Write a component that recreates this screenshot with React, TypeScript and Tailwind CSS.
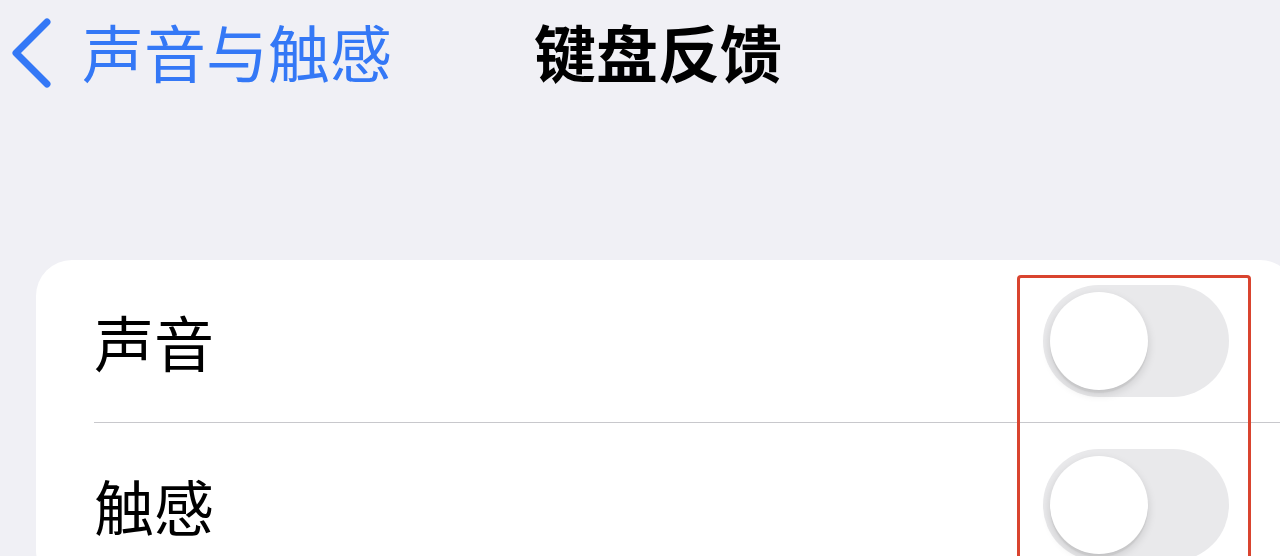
import { ReactNode } from "react"

const FONT = { fontFamily: '"Noto Sans CJK SC", "Noto Sans", sans-serif' }

/* ─── iOS style switch, off state ─── */

const Switch = () => (
  <div className="relative h-[112px] w-[186px] rounded-full bg-[#e9e9eb]">
    <div className="absolute left-[7px] top-[7px] size-[98px] rounded-full bg-white shadow-[0_4px_10px_rgba(0,0,0,0.14),0_3px_1px_rgba(0,0,0,0.05)]" />
  </div>
)

const Row = ({ label, last, children }: { label: string; last?: boolean; children: ReactNode }) => (
  <div className="flex h-[163px] items-center pl-[58px]">
    <div
      className={
        last
          ? "flex h-full flex-1 items-center"
          : "flex h-full flex-1 items-center border-b border-[#c8c8cc]"
      }
    >
      <span className="flex-1 text-[60px] leading-none text-black" style={FONT}>
        {label}
      </span>
      <div className="mr-[67px]">{children}</div>
    </div>
  </div>
)

export default function App() {
  return (
    <div className="relative h-[556px] w-[1280px] overflow-hidden bg-[#f0f0f5]" style={FONT}>
      {/* Nav bar */}
      <div className="flex h-[102px] items-center">
        <svg width="60" height="102" viewBox="0 0 60 102" className="ml-[4px] shrink-0">
          <polyline
            points="43,22 12,53 43,84"
            fill="none"
            stroke="#3478f6"
            strokeWidth="7"
            strokeLinecap="round"
            strokeLinejoin="round"
          />
        </svg>
        <span className="ml-[18px] text-[62px] leading-none text-[#3478f6]">声音与触感</span>
        <span className="ml-[142px] text-[62px] font-bold leading-none text-black">键盘反馈</span>
      </div>

      {/* Settings group */}
      <div className="ml-[36px] mt-[158px] w-[1260px] rounded-[36px] bg-white">
        <Row label="声音">
          <Switch />
        </Row>
        <Row label="触感" last>
          <Switch />
        </Row>
      </div>

      {/* Annotation box round both switches */}
      <div className="absolute left-[1017px] top-[275px] h-[320px] w-[234px] rounded-[4px] border-[3px] border-[#d9442f]" />
    </div>
  )
}
